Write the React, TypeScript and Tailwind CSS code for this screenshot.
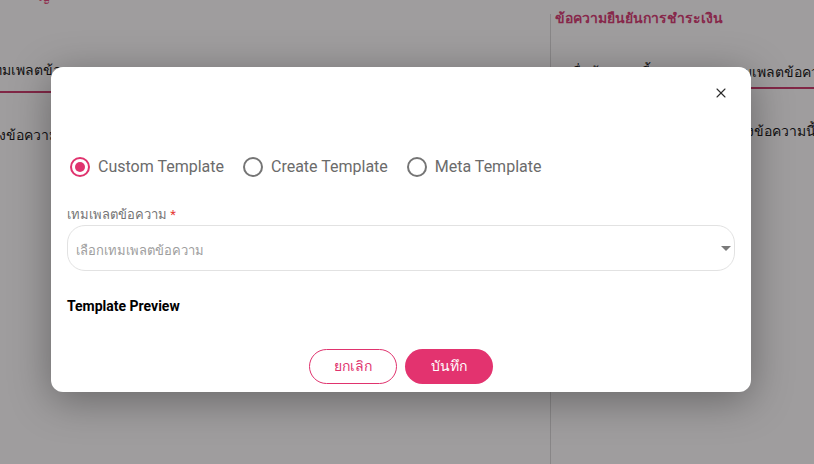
import { X } from "lucide-react";

const font = { fontFamily: "Roboto, 'Noto Sans', sans-serif" };

function Radio({ checked, label }: { checked?: boolean; label: string }) {
  return (
    <label className="flex items-center gap-2 cursor-pointer">
      <span
        className={`w-5 h-5 rounded-full border-2 flex items-center justify-center ${
          checked ? "border-[#e0336e]" : "border-[#757575]"
        }`}
      >
        {checked && <span className="w-[10px] h-[10px] rounded-full bg-[#e0336e]" />}
      </span>
      <span className="text-[16px] text-[#6b6b6b]">{label}</span>
    </label>
  );
}

function Background() {
  return (
    <div className="w-[814px] h-[464px] bg-white flex overflow-hidden text-[14px] text-black">
      <div className="w-[550px] shrink-0 flex flex-col">
        <div className="h-[6px] overflow-hidden">
          <div className="ml-[38px] -mt-[14px] text-[#e0336e] leading-[20px]">ญ</div>
        </div>
        <div className="mt-[54px] h-[20px] -ml-[12px] whitespace-nowrap">เทมเพลตข้อความ</div>
        <div className="mt-[11px] h-[2px] bg-[#c8295f]" />
        <div className="mt-[32px] -ml-[10px] whitespace-nowrap">ตั้งข้อความ</div>
      </div>
      <div className="flex-1 border-l border-[#d6d6d6] mt-[14px] flex flex-col pl-[4px]">
        <div className="text-[14px] font-bold text-[#d42a68] leading-[20px] -mt-[6px]">ข้อความยืนยันการชำระเงิน</div>
        <div className="mt-[34px] flex whitespace-nowrap leading-[20px]">
          <span className="ml-[16px]">ชื่อข้อความนี้</span>
          <span className="ml-[78px]">เทมเพลตข้อความ</span>
        </div>
        <div className="mt-[5px] h-[2px] bg-[#c8295f]" />
        <div className="mt-[32px] ml-[183px] whitespace-nowrap">ตั้งข้อความนี้</div>
      </div>
    </div>
  );
}

export default function App() {
  return (
    <div className="relative w-[814px] h-[464px] overflow-hidden" style={font}>
      <Background />
      <div className="absolute inset-0 bg-[#2a2527]/45 pl-[51px] pt-[67px]">
        <div className="w-[700px] h-[325px] bg-white rounded-[12px] shadow-[0_8px_40px_rgba(0,0,0,0.35)] flex flex-col">
          <div className="h-[52px] flex items-center justify-end pr-[22px]">
            <X size={16} strokeWidth={1.6} className="text-[#2b2b2b]" />
          </div>
          <div className="mt-[36px] pl-[19px] flex items-center gap-[19px]">
            <Radio checked label="Custom Template" />
            <Radio label="Create Template" />
            <Radio label="Meta Template" />
          </div>
          <div className="px-4">
            <div className="mt-[27px] text-[13px] leading-[18px] text-[#757575]">
              เทมเพลตข้อความ <span className="text-[#e53935]">*</span>
            </div>
            <div className="mt-[1px] h-[46px] rounded-[18px] border border-[#e2e2e2] flex items-center justify-between pl-[8px] pr-[2px]">
              <span className="text-[13px] text-[#9e9e9e] pt-[5px]">เลือกเทมเพลตข้อความ</span>
              <svg width="12" height="8" viewBox="0 0 12 8" className="mt-[2px]">
                <path d="M1 1h10L6 6z" fill="#7a7a7a" />
              </svg>
            </div>
            <div className="mt-[25px] text-[14px] leading-[20px] font-bold text-black">Template Preview</div>
          </div>
          <div className="mt-[33px] flex justify-center gap-2">
            <button className="w-[88px] h-[35px] rounded-[18px] border border-[#e0336e] text-[#e0336e] text-[14px] bg-white">
              ยกเลิก
            </button>
            <button className="w-[88px] h-[35px] rounded-[18px] bg-[#e3336f] text-white text-[14px]">
              บันทึก
            </button>
          </div>
        </div>
      </div>
    </div>
  );
}
